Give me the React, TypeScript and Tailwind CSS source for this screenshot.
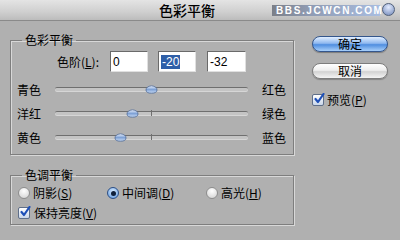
import React from "react";

const FONT = "font-['Noto_Sans_CJK_SC','Noto_Sans',sans-serif]";

function Check() {
  return (
    <span className="relative flex h-[12px] w-[12px] shrink-0 items-center justify-center rounded-[2px] border border-[#5f6f8a] bg-[linear-gradient(#ffffff,#c9d6ea)]">
      <svg width="11" height="11" viewBox="0 0 11 11" className="absolute -top-[2px] left-[1px]">
        <path d="M1.5 6 L4 9 L9.5 1" fill="none" stroke="#1d4fb8" strokeWidth="2.2" strokeLinecap="round" strokeLinejoin="round" />
      </svg>
    </span>
  );
}

function Radio({ on }: { on?: boolean }) {
  return (
    <span
      className={`flex h-[12px] w-[12px] shrink-0 items-center justify-center rounded-full border ${
        on
          ? "border-[#2c4f86] bg-[radial-gradient(circle_at_50%_35%,#d9ecff,#5b95dd)]"
          : "border-[#8d8d8d] bg-[radial-gradient(circle_at_50%_30%,#ffffff,#d0d0d0)]"
      }`}
    >
      {on && <span className="h-[5px] w-[5px] rounded-full bg-[#0e1f3a]" />}
    </span>
  );
}

function Thumb() {
  return (
    <svg width="13" height="9" viewBox="0 0 13 9">
      <defs>
        <linearGradient id="tg" x1="0" y1="0" x2="0" y2="1">
          <stop offset="0" stopColor="#eef4ff" />
          <stop offset="0.5" stopColor="#7fa2d6" />
          <stop offset="1" stopColor="#c9dcf5" />
        </linearGradient>
      </defs>
      <path d="M1 5 Q1 1.5 6.5 0.8 Q12 1.5 12 5 Q12 8.2 6.5 8.2 Q1 8.2 1 5 Z" fill="url(#tg)" stroke="#4f6a96" strokeWidth="0.8" />
    </svg>
  );
}

function SliderRow({ left, right, pos, tick }: { left: string; right: string; pos: number; tick?: boolean }) {
  return (
    <div className="flex h-[24px] items-center pl-[6px]">
      <span className="w-[24px] text-[12px] leading-[14px] text-black">{left}</span>
      <div className="relative ml-[14px] h-[24px] w-[193px]">
        <div className="absolute left-0 right-0 top-[9px] h-[4px] rounded-full border-t border-[#6f6f6f] bg-[#c4c4c4] shadow-[0_1px_0_#d6d6d6]" />
        {tick && <div className="absolute left-[96px] top-[8px] h-[6px] w-[1px] bg-[#6f6f6f]" />}
        <div className="absolute top-[7px]" style={{ left: pos - 6 }}>
          <Thumb />
        </div>
      </div>
      <span className="ml-[14px] text-[12px] leading-[14px] text-black">{right}</span>
    </div>
  );
}

function Field({ children, selected }: { children: string; selected?: boolean }) {
  return (
    <div className="flex h-[21px] items-center border border-t-[#6a6a6a] border-l-[#6a6a6a] border-b-[#e0e0e0] border-r-[#e0e0e0] bg-white pl-[2px] font-['Liberation_Sans',sans-serif] text-[12px] text-black">
      {selected ? <span className="bg-[#2f5fa8] px-[1px] leading-[14px] text-white">{children}</span> : children}
    </div>
  );
}

export default function App() {
  return (
    <div className={`flex h-[240px] w-[400px] flex-col overflow-hidden bg-[#b0b0b0] ${FONT}`}>
      {/* title bar */}
      <div className="relative flex h-[21px] shrink-0 items-center justify-center border-b border-[#8a8a8a] bg-[linear-gradient(#e4e4e4,#cfcfcf_60%,#bcbcbc)]">
        <span className="ml-[-26px] text-[14px] font-medium leading-[16px] text-black">色彩平衡</span>
        <div className="absolute left-[272px] top-[5px] flex h-[11px] w-[108px] items-center bg-[linear-gradient(90deg,#7b7f88,#8f9bb3_35%,#a9bde0)] pl-[4px] font-['Liberation_Sans',sans-serif] text-[10px] font-bold leading-[11px] tracking-[1.6px] text-white">
          BBS.JCWCN.COM
        </div>
        <div className="absolute left-[382px] top-[3px] h-[13px] w-[13px] rounded-full border border-[#51607a] bg-[radial-gradient(circle_at_50%_30%,#e4ecff,#6f86b8)]" />
      </div>

      <div className="flex pl-[10px] pt-[11px]">
        {/* left column */}
        <div className="flex w-[284px] flex-col">
          <fieldset className="border border-[#7e7e7e] pb-[4px] shadow-[inset_1px_1px_0_#d8d8d8,1px_1px_0_#d8d8d8]">
            <legend className="ml-[11px] px-[3px] text-[12px] leading-[16px] text-black">色彩平衡</legend>
            <div className="mt-[3px] flex h-[21px] items-center">
              <span className="ml-[46px] w-[44px] text-[12px] leading-[14px] text-black">
                色阶(<span className="underline">L</span>):
              </span>
              <div className="ml-[9px] w-[38px]">
                <Field>0</Field>
              </div>
              <div className="ml-[10px] w-[38px]">
                <Field selected>-20</Field>
              </div>
              <div className="ml-[11px] w-[39px]">
                <Field>-32</Field>
              </div>
            </div>
            <div className="mt-[6px] flex flex-col">
              <SliderRow left="青色" right="红色" pos={96} />
              <SliderRow left="洋红" right="绿色" pos={77} tick />
              <SliderRow left="黄色" right="蓝色" pos={65} tick />
            </div>
          </fieldset>

          <fieldset className="mt-[12px] border border-[#7e7e7e] pb-[1px] shadow-[inset_1px_1px_0_#d8d8d8,1px_1px_0_#d8d8d8]">
            <legend className="ml-[11px] px-[3px] text-[12px] leading-[16px] text-black">色调平衡</legend>
            <div className="flex h-[20px] items-center pl-[7px] text-[12px] leading-[14px] text-black">
              <div className="flex w-[89px] items-center gap-[3px]">
                <Radio />
                <span>
                  阴影(<span className="underline">S</span>)
                </span>
              </div>
              <div className="flex w-[99px] items-center gap-[3px]">
                <Radio on />
                <span>
                  中间调(<span className="underline">D</span>)
                </span>
              </div>
              <div className="flex items-center gap-[3px]">
                <Radio />
                <span>
                  高光(<span className="underline">H</span>)
                </span>
              </div>
            </div>
            <div className="flex h-[20px] items-center gap-[4px] pl-[7px] text-[12px] leading-[14px] text-black">
              <Check />
              <span>
                保持亮度(<span className="underline">V</span>)
              </span>
            </div>
          </fieldset>
        </div>

        {/* right column */}
        <div className="ml-[18px] flex w-[76px] flex-col">
          <button className="mt-[4px] flex h-[16px] items-center justify-center rounded-full border border-[#34568c] bg-[linear-gradient(#e2efff,#8fb8ef_45%,#4f8ee0_55%,#a9d0fa)] text-[12px] leading-[14px] text-black shadow-[0_1px_1px_rgba(0,0,0,0.3)]">
            确定
          </button>
          <button className="mt-[11px] flex h-[16px] items-center justify-center rounded-full border border-[#7d7d7d] bg-[linear-gradient(#ffffff,#eeeeee_45%,#d2d2d2_55%,#f4f4f4)] text-[12px] leading-[14px] text-black shadow-[0_1px_1px_rgba(0,0,0,0.25)]">
            取消
          </button>
          <div className="mt-[13px] flex h-[16px] items-center gap-[3px] text-[12px] leading-[14px] text-black">
            <Check />
            <span>
              预览(<span className="underline">P</span>)
            </span>
          </div>
        </div>
      </div>
    </div>
  );
}
